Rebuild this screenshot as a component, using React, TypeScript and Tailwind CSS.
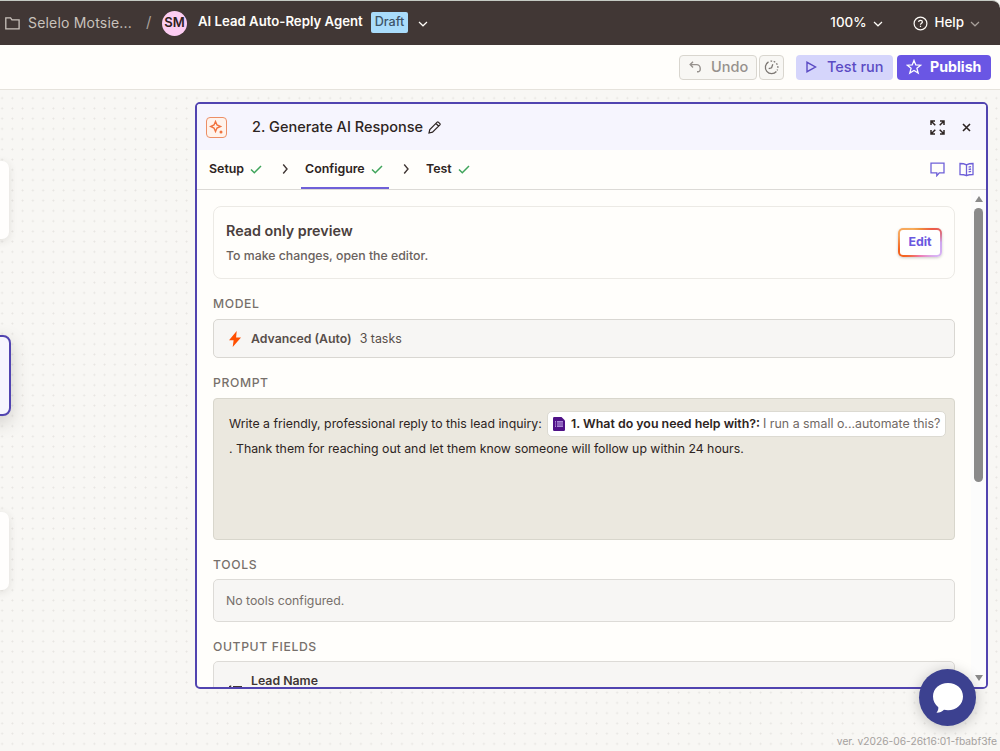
import { FC, ReactNode } from "react";

const ChevronDown: FC<{ className?: string }> = ({ className }) => (
  <svg className={className} width="10" height="6" viewBox="0 0 10 6" fill="none" stroke="currentColor" strokeWidth="1.2">
    <path d="M1 1l4 3.8L9 1" />
  </svg>
);

const TopBar: FC = () => {
  return (
    <header className="flex h-[45px] shrink-0 items-center rounded-tr-lg border-t border-[#c4cac3] bg-[#413735] pb-[2px] text-[13.4px] text-[#fffdf9]">
      {/* Breadcrumb */}
      <svg className="ml-[5px] mt-0.5 shrink-0" width="15" height="13" viewBox="0 0 15 13" fill="none" stroke="#c9c2bc" strokeWidth="1.3">
        <path d="M.8 11.8V.8h4.8l1.3 2h7.2v9H.8z" />
      </svg>
      <span className="ml-2 w-[105px] whitespace-nowrap text-[14px] tracking-[0.19px] text-[#c9c2bc]">Selelo Motsie...</span>
      <span className="ml-[13px] w-4 text-[15px] text-[#a8a09b]">/</span>
      <span className="mt-0.5 flex h-[25px] w-[25px] shrink-0 items-center justify-center rounded-full bg-[#fccdf2] text-[13px] font-semibold text-[#2d2020]">
        SM
      </span>
      <span className="ml-[11px] w-[165px] whitespace-nowrap text-[13.2px] font-semibold">AI Lead Auto-Reply Agent</span>
      <span className="ml-2 flex h-[21px] w-[37px] items-center justify-center rounded-[2px] bg-[#a9dcfb] text-[12.6px] font-medium text-[#3d5468]">
        Draft
      </span>
      <ChevronDown className="ml-[10px] mt-[3px]" />
      {/* Zoom and help */}
      <span className="ml-auto font-medium">100%</span>
      <ChevronDown className="ml-[6px] mt-[3px]" />
      <svg className="ml-[30px] mt-0.5" width="15" height="15" viewBox="0 0 15 15" fill="none" stroke="currentColor" strokeWidth="1.2">
        <circle cx="7.5" cy="7.5" r="6.4" />
        <path d="M5.6 6.1c.1-2.4 3.8-2.3 3.8-.1 0 1.3-1.9 1.3-1.9 2.7M7.5 9.8v1.3" />
      </svg>
      <span className="ml-[7px] font-medium">Help</span>
      <ChevronDown className="ml-[6px] mr-5 mt-[3px] text-[#a8a09b]" />
    </header>
  );
};

const Toolbar: FC = () => {
  return (
    <div className="flex h-[45px] shrink-0 items-center justify-end border-b border-[#e6e3dc] bg-[#fffefb] pr-[9px] text-[14.5px]">
      <button className="flex h-[25px] w-[78px] items-center rounded-[4px] border border-[#d9d6cf] bg-[#f8f7f4] pl-[9px] font-medium text-[#96918d]">
        <svg width="13" height="12" viewBox="0 0 13 12" fill="none" stroke="currentColor" strokeWidth="1.4">
          <path d="M4 .8L1.2 3.6 4 6.4M1.4 3.6h6.2a3.6 3.6 0 0 1 3.6 3.6v1.3a2.3 2.3 0 0 1-2.3 2.3H8" />
        </svg>
        <span className="ml-[9px]">Undo</span>
      </button>
      <button className="ml-0.5 flex h-[25px] w-[25px] items-center justify-center rounded-[4px] border border-[#d9d6cf] bg-[#f8f7f4] text-[#7c7773]">
        <svg className="shrink-0" width="15" height="15" viewBox="0 0 15 15" fill="none" stroke="currentColor" strokeWidth="1.3">
          <path d="M4.5 1.9A6.3 6.3 0 1 0 12.4 11.5M8.8 4.2L7.6 7.8l-2.9.9" />
          <path d="M6.5 1.2a6.3 6.3 0 0 1 6.6 9.2" strokeDasharray="1.7 1.5" />
        </svg>
      </button>
      <button className="ml-3 flex h-[25px] w-[97px] items-center rounded-[4px] bg-[#d5d5fb] pl-2.5 font-medium text-[#5b4bc4]">
        <svg width="11" height="12" viewBox="0 0 11 12" fill="none" stroke="currentColor" strokeWidth="1.4">
          <path d="M1 1.3v9.4L9.5 6z" />
        </svg>
        <span className="ml-[10px] whitespace-nowrap">Test run</span>
      </button>
      <button className="ml-1 flex h-[25px] w-[94px] items-center rounded-[4px] bg-[#6a56e4] pl-[9px] font-bold text-white">
        <svg width="16" height="16" viewBox="0 0 16 16" fill="none" stroke="currentColor" strokeWidth="1.3">
          <path d="M8 1.4l1.8 4.5 4.9.3-3.8 3.1 1.3 4.8L8 11.4l-4.2 2.7 1.3-4.8-3.8-3.1 4.9-.3z" />
        </svg>
        <span className="ml-2 text-[14.2px]">Publish</span>
      </button>
    </div>
  );
};

const Check: FC = () => (
  <svg width="12" height="9" viewBox="0 0 12 9" fill="none" stroke="#3fa45b" strokeWidth="1.5">
    <path d="M1 4.5l3.3 3.2L11 1" />
  </svg>
);

const ChevronRight: FC = () => (
  <svg width="7" height="12" viewBox="0 0 7 12" fill="none" stroke="#413735" strokeWidth="1.4">
    <path d="M1.2 1.5L5 6l-3.8 4.5" />
  </svg>
);

const Label: FC<{ children: ReactNode }> = ({ children }) => (
  <h3 className="flex h-10 items-center pt-[10px] text-[12.2px] font-medium tracking-[0.62px] text-[#77706b]">{children}</h3>
);

const PanelHeader: FC = () => {
  return (
    <div className="flex h-[46px] shrink-0 items-center bg-[#f6f5fe] text-[#2d2422]">
      <span className="ml-[9px] flex h-[21px] w-[21px] items-center justify-center rounded-[4px] border border-[#ec8f66] bg-[#fff3ec]">
        <svg width="15" height="15" viewBox="0 0 15 15" fill="none" stroke="#f0733f" strokeWidth="1.4">
          <path d="M6.5 1.5L8 5l3.5 1.5L8 8l-1.5 3.5L5 8 1.5 6.5 5 5z" />
          <circle cx="12" cy="12" r="1.5" fill="#f0733f" stroke="none" />
        </svg>
      </span>
      <h2 className="ml-[25px] w-[171px] whitespace-nowrap text-[14.5px] font-medium">2. Generate AI Response</h2>
      <svg className="ml-[5px]" width="13" height="13" viewBox="0 0 13 13" fill="none" stroke="currentColor" strokeWidth="1.2">
        <path d="M1 12l.8-3.5L9.2 1.1a.8.8 0 0 1 1.1 0l1.6 1.6a.8.8 0 0 1 0 1.1l-7.4 7.4zM8 2.5L10.5 5" />
      </svg>
      <svg className="ml-auto" width="15" height="15" viewBox="0 0 15 15" fill="none" stroke="currentColor" strokeWidth="1.5">
        <path d="M1 5V1h4M1.2 1.2l4.1 4.1M10 1h4v4M13.8 1.2L9.7 5.3M1 10v4h4M1.2 13.8l4.1-4.1M10 14h4v-4M13.8 13.8L9.7 9.7" />
      </svg>
      <svg className="ml-[17px] mr-[15px]" width="9" height="9" viewBox="0 0 9 9" fill="none" stroke="currentColor" strokeWidth="1.6">
        <path d="M1 1l7 7M8 1L1 8" />
      </svg>
    </div>
  );
};

const Tabs: FC = () => {
  return (
    <nav className="flex h-10 shrink-0 items-stretch border-b border-[#dcdad6] text-[12.4px] font-semibold text-[#2d2422]">
      <div className="ml-3 flex items-center pb-px">
        <span className="w-[35px]">Setup</span>
        <span className="ml-[6px]"><Check /></span>
      </div>
      <div className="ml-[20px] flex items-center pb-px"><ChevronRight /></div>
      <div className="ml-[12px] flex w-[88px] items-center border-b-2 border-[#6f60d8] pl-1 pt-px">
        <span className="w-[60px]">Configure</span>
        <span className="ml-[6px]"><Check /></span>
      </div>
      <div className="ml-[14px] flex items-center pb-px"><ChevronRight /></div>
      <div className="ml-[16px] flex items-center pb-px">
        <span className="w-[26px]">Test</span>
        <span className="ml-[6px]"><Check /></span>
      </div>
      <div className="ml-auto mr-[12px] flex items-center gap-[14px]">
        <svg width="15" height="15" viewBox="0 0 15 15" fill="none" stroke="#6f60d8" strokeWidth="1.3">
          <path d="M1 1.2h13v9.6H9.3L6.8 13.7V10.8H1z" />
        </svg>
        <svg width="15" height="15" viewBox="0 0 15 15" fill="none" stroke="#6f60d8" strokeWidth="1.3">
          <path d="M7.5 2.8C5.5 1.8 3 1.5 1 1.5v11c2 0 4.5.2 6.5 1.2 2-1 4.5-1.2 6.5-1.2v-11c-2 0-4.5.3-6.5 1.3zv10.9M9.6 5.1l2.5-.5M9.6 7.5l2.5-.5M9.6 9.9l2.5-.5" />
        </svg>
      </div>
    </nav>
  );
};

const StepPanel: FC = () => {
  return (
    <section className="flex h-[587px] w-[793px] flex-col overflow-hidden rounded-[5px] border-2 border-[#5144b0] bg-[#fffefb]">
      <PanelHeader />
      <Tabs />
      <div className="flex min-h-0 flex-1">
        <div className="flex-1 overflow-hidden pl-4 pr-4 pt-4 text-[12.3px]">
          {/* Read only banner */}
          <div className="flex h-[73px] items-center rounded-lg border border-[#eceae5] pl-3 pr-3">
            <div className="pt-[2px]">
              <h3 className="text-[14.3px] font-semibold leading-[22px] text-[#4a403d]">Read only preview</h3>
              <p className="mt-[3px] font-medium leading-[22px] text-[#6a625e]">To make changes, open the editor.</p>
            </div>
            <div className="ml-auto rounded-[5px] bg-[conic-gradient(from_0deg,#f0933f,#ee5b45_12%,#e0656a_17%,#cda6ee_25%,#d8b3f5_36%,#f07ab0_50%,#f4631e_64%,#f4631e_70%,#f7a45c_80%,#f7ad5c_92%,#f0933f)] p-[2px] shadow-[0_1px_3px_rgba(0,0,0,0.2)]">
              <button className="flex h-[25px] w-[40px] items-center justify-center rounded-[3px] bg-white text-[12.4px] font-bold text-[#6a58e0]">
                Edit
              </button>
            </div>
          </div>

          <Label>MODEL</Label>
          <div className="flex h-[39px] items-center rounded-[5px] border border-[#d9d7d2] bg-[#f7f6f4] pl-[15px]">
            <svg width="12" height="16" viewBox="0 0 12 16" fill="#ff4f00">
              <path d="M7.7 0L0 9.3h4.6L3.7 16 12 6.4H7.1z" />
            </svg>
            <span className="ml-[10px] pt-px font-semibold text-[#574e4a]">Advanced (Auto)</span>
            <span className="ml-[8px] pt-px text-[12.4px] text-[#574e4a]">3 tasks</span>
          </div>

          <Label>PROMPT</Label>
          <div className="h-[142px] rounded-[4px] border border-[#d8d6cc] bg-[#ebe8df] pl-[15px] pt-3 text-[#2d2422]">
            <div className="flex h-[25px] items-center whitespace-nowrap">
              <span className="w-[313px] pt-px">Write a friendly, professional reply to this lead inquiry:</span>
              <span className="ml-[5px] flex h-[26px] w-[399px] shrink-0 items-center rounded-[5px] border border-[#dcdad2] bg-white pl-[5px] text-[12.4px]">
                <svg className="shrink-0" width="12" height="14" viewBox="0 0 12 14">
                  <path d="M1.2 0H8.5L12 3.5V12.8Q12 14 10.8 14H1.2Q0 14 0 12.8V1.2Q0 0 1.2 0z" fill="#4f1187" />
                  <path d="M2 4.9h1M4 4.9h6M2 7h1M4 7h6M2 9.1h1M4 9.1h6" stroke="#c9b1ef" strokeWidth="1.1" />
                </svg>
                <span className="ml-[6px] pt-px font-semibold">1. What do you need help with?:</span>
                <span className="ml-[3px] pt-px text-[#716965]">I run a small o...automate this?</span>
              </span>
            </div>
            <p className="leading-[25px]">. Thank them for reaching out and let them know someone will follow up within 24 hours.</p>
          </div>

          <Label>TOOLS</Label>
          <div className="-mt-px flex h-[43px] items-center rounded-[5px] border border-[#dddbd7] bg-[#f7f6f4] pl-3 pt-px text-[#77706b]">
            No tools configured.
          </div>

          <Label>OUTPUT FIELDS</Label>
          <div className="-mt-px flex h-[60px] rounded-[5px] border border-[#dddbd7] bg-[#f7f6f4] pl-[15px] pt-[9px]">
            <svg className="mt-[14px]" width="13" height="13" viewBox="0 0 13 13" stroke="#413735" strokeWidth="1.5">
              <path d="M4 1.7h9M4 6.5h9M4 11.5h9M1.5 .5v3M0 1.7h1.5M0 6.5h2M0 11.5h2" />
            </svg>
            <span className="ml-[9px] font-semibold leading-5 text-[#413735]">Lead Name</span>
          </div>
        </div>

        {/* Scrollbar */}
        <div className="flex w-[15px] flex-col items-center bg-[#fcfcfc] pb-[6px] pt-[6px]">
          <svg width="8" height="6" viewBox="0 0 8 6" fill="#8a8a8a"><path d="M4 0l4 6H0z" /></svg>
          <div className="mt-[6px] h-[274px] w-[9px] rounded-full bg-[#8a8a8a]" />
          <svg className="mt-auto" width="8" height="6" viewBox="0 0 8 6" fill="#8a8a8a"><path d="M4 6l4-6H0z" /></svg>
        </div>
      </div>
    </section>
  );
};

const App: FC = () => {
  return (
    <div className="flex h-[751px] w-[1000px] flex-col overflow-hidden bg-[#f8f7f4] font-['Inter',sans-serif]">
      <TopBar />
      <Toolbar />
      <main className="relative flex flex-1 justify-end bg-[radial-gradient(circle,#e6e4e0_0.8px,transparent_1.1px)] bg-[length:10.25px_10.25px] bg-[position:-3px_3px] pr-3 pt-3">
        {/* Canvas nodes that run off the left edge */}
        <div className="absolute -left-5 top-[71px] h-[78px] w-[29px] rounded-[7px] bg-[#fffefd] shadow-[0_2px_8px_rgba(60,50,40,0.12)]" />
        <div className="absolute -left-5 top-[245px] h-[81px] w-[31px] rounded-[8px] border-2 border-[#5144b0] bg-[#f6f5fe] shadow-[0_6px_18px_rgba(60,50,40,0.22)]" />
        <div className="absolute -left-5 top-[422px] h-[78px] w-[29px] rounded-[7px] bg-[#fffefd] shadow-[0_2px_8px_rgba(60,50,40,0.12)]" />
        <StepPanel />
        {/* Chat launcher */}
        <button className="absolute bottom-[25px] right-6 flex h-[57px] w-[57px] items-center justify-center rounded-full bg-[#3c4190] shadow-[0_2px_14px_rgba(0,0,0,0.22)]">
          <svg className="mt-px" width="30" height="31" viewBox="0 0 30 31" fill="white">
            <path d="M15 0C6.5 0 0 5.700 0 13.500c0 4.500 2 8.200 5.300 10.700.2 2.300-.6 4.100-1.800 5.500 3 .1 5.500-1.100 7.500-3 1.300.3 2.600.5 4 .5 8.500 0 15-5.900 15-13.700S23.500 0 15 0z" />
          </svg>
        </button>
        <span className="absolute bottom-[2px] right-[3px] whitespace-nowrap text-[10.25px] leading-4 text-[#a5a19e]">
          ver. v2026-06-26t16:01-fbabf3fe
        </span>
      </main>
    </div>
  );
};

export default App;
